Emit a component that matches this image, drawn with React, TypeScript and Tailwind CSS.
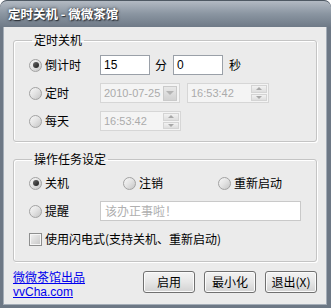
import { ReactNode } from 'react';

const cjk = "font-['Noto_Sans_CJK_SC','Noto_Sans',sans-serif]";
const num = "font-['Liberation_Sans','Noto_Sans_CJK_SC',sans-serif]";

// ─── Small controls ─────────────────────────────────────────────

const Radio = ({ checked = false }: { checked?: boolean }) => (
  <span className="w-[13px] h-[13px] rounded-full border border-[#a2a2a2] bg-gradient-to-br from-[#f8f8f8] via-[#e2e2e2] to-[#c4c4c4] flex items-center justify-center shrink-0">
    {checked && (
      <span className="w-[6px] h-[6px] rounded-full bg-gradient-to-br from-[#6a6a6a] to-[#1e1e1e]" />
    )}
  </span>
);

const RadioItem = ({ label, checked, className = '' }: { label: string; checked?: boolean; className?: string }) => (
  <div className={`flex items-center gap-[3px] ${className}`}>
    <Radio checked={checked} />
    <span className="text-[12px] leading-[14px] text-black">{label}</span>
  </div>
);

const Spin = () => (
  <div className="flex flex-col gap-[1px] w-[16px] h-[16px] shrink-0">
    {[0, 1].map((i) => (
      <div
        key={i}
        className="flex-1 border border-[#d4d4d4] bg-gradient-to-b from-[#f2f2f2] to-[#dedede] flex items-center justify-center"
      >
        <span
          className={`w-0 h-0 border-l-[3px] border-r-[3px] border-transparent ${
            i === 0 ? 'border-b-[3px] border-b-[#a8a8a8]' : 'border-t-[3px] border-t-[#a8a8a8]'
          }`}
        />
      </div>
    ))}
  </div>
);

const TextBox = ({ value, className = '' }: { value: string; className?: string }) => (
  <div className={`h-[20px] border border-[#9aa0a8] bg-white flex items-center px-[3px] ${className}`}>
    <span className={`${num} text-[12px] leading-none text-black`}>{value}</span>
  </div>
);

const DisabledBox = ({ value, className = '', children }: { value: string; className?: string; children?: ReactNode }) => (
  <div className={`h-[20px] border border-[#d6d6d6] bg-[#f4f4f4] flex items-center justify-between pl-[3px] pr-[1px] ${className}`}>
    <span className={`${num} text-[11px] leading-none text-[#ababab]`}>{value}</span>
    {children}
  </div>
);

const GroupBox = ({ title, className = '', children }: { title: string; className?: string; children: ReactNode }) => (
  <fieldset className={`border border-[#c4c4c4] rounded-[3px] shadow-[inset_1px_1px_0_#fff,1px_1px_0_#fff] mx-[9px] px-[15px] ${className}`}>
    <legend className="ml-[3px] px-[2px] text-[12px] leading-[14px] text-black">{title}</legend>
    {children}
  </fieldset>
);

const Btn = ({ label }: { label: string }) => (
  <button className="w-[52px] h-[22px] rounded-[3px] border border-[#707070] bg-gradient-to-b from-[#f3f3f3] via-[#e6e6e6] to-[#d2d2d2] shadow-[inset_0_0_0_1px_#fbfbfb] text-[12px] leading-none text-black flex items-center justify-center">
    {label}
  </button>
);

// ─── Window ─────────────────────────────────────────────────────

export default function App() {
  return (
    <div className={`w-[331px] h-[308px] flex flex-col rounded-t-[7px] bg-[#6d7885] overflow-hidden ${cjk}`}>
      {/* Title bar */}
      <div className="h-[27px] shrink-0 bg-gradient-to-b from-[#b3bac3] via-[#8a95a1] to-[#6f7a87] flex items-center pl-[8px] border-t border-[#4f5963] rounded-t-[7px]">
        <span className="text-white font-bold text-[12.5px] leading-none [text-shadow:0_0_3px_#2a2f35,1px_1px_1px_#2a2f35]">
          定时关机 - 微微茶馆
        </span>
      </div>

      {/* Client area */}
      <div className="flex-1 ml-[3px] mr-[4px] mb-[3px] bg-[#ebebeb] border-l border-r border-b border-[#a4adb7] flex flex-col">
        <GroupBox title="定时关机" className="mt-[6px] pt-[8px] pb-[10px]">
          <div className="flex flex-col gap-[8px]">
            <div className="flex items-center h-[20px]">
              <RadioItem label="倒计时" checked className="w-[71px]" />
              <TextBox value="15" className="w-[50px]" />
              <span className="ml-[5px] w-[18px] text-[12px] leading-none">分</span>
              <TextBox value="0" className="w-[50px]" />
              <span className="ml-[6px] text-[12px] leading-none">秒</span>
            </div>
            <div className="flex items-center h-[20px]">
              <RadioItem label="定时" className="w-[71px]" />
              <DisabledBox value="2010-07-25" className="w-[80px]">
                <div className="w-[14px] h-[15px] border border-[#cacaca] bg-gradient-to-b from-[#e8e8e8] to-[#d2d2d2] flex items-center justify-center mr-[1px]">
                  <span className="w-0 h-0 border-l-[4px] border-r-[4px] border-t-[4px] border-transparent border-t-[#b4b4b4]" />
                </div>
              </DisabledBox>
              <DisabledBox value="16:53:42" className="w-[82px] ml-[7px]">
                <Spin />
              </DisabledBox>
            </div>
            <div className="flex items-center h-[20px]">
              <RadioItem label="每天" className="w-[71px]" />
              <DisabledBox value="16:53:42" className="w-[81px]">
                <Spin />
              </DisabledBox>
            </div>
          </div>
        </GroupBox>

        <GroupBox title="操作任务设定" className="mt-[10px] pt-[7px] pb-[12px]">
          <div className="flex flex-col gap-[8px]">
            <div className="flex items-center h-[20px]">
              <RadioItem label="关机" checked className="w-[94px]" />
              <RadioItem label="注销" className="w-[95px]" />
              <RadioItem label="重新启动" />
            </div>
            <div className="flex items-center h-[20px]">
              <RadioItem label="提醒" className="w-[71px]" />
              <div className="w-[201px] h-[20px] border border-[#c9c9c9] bg-white flex items-center px-[4px]">
                <span className="text-[12px] leading-none text-[#b0b0b0]">该办正事啦！</span>
              </div>
            </div>
            <div className="flex items-center h-[20px] gap-[3px]">
              <span className="w-[13px] h-[13px] border border-[#8e8f8f] bg-gradient-to-br from-[#f3f3f3] via-[#dcdcdc] to-[#c6c6c6] shadow-[inset_0_0_0_1px_#f6f6f6] shrink-0" />
              <span className="text-[12px] leading-[14px]">使用闪电式(支持关机、重新启动)</span>
            </div>
          </div>
        </GroupBox>

        <div className="flex items-start justify-between ml-[9px] mr-[9px] mt-[8px]">
          <div className="flex flex-col gap-[1px] text-[12px] leading-[14px] text-[#0000ee]">
            <span className="underline">微微茶馆出品</span>
            <span className={`${num} underline`}>vvCha.com</span>
          </div>
          <div className="flex gap-[9px] mt-[1px]">
            <Btn label="启用" />
            <Btn label="最小化" />
            <Btn label="退出(X)" />
          </div>
        </div>
      </div>
    </div>
  );
}
